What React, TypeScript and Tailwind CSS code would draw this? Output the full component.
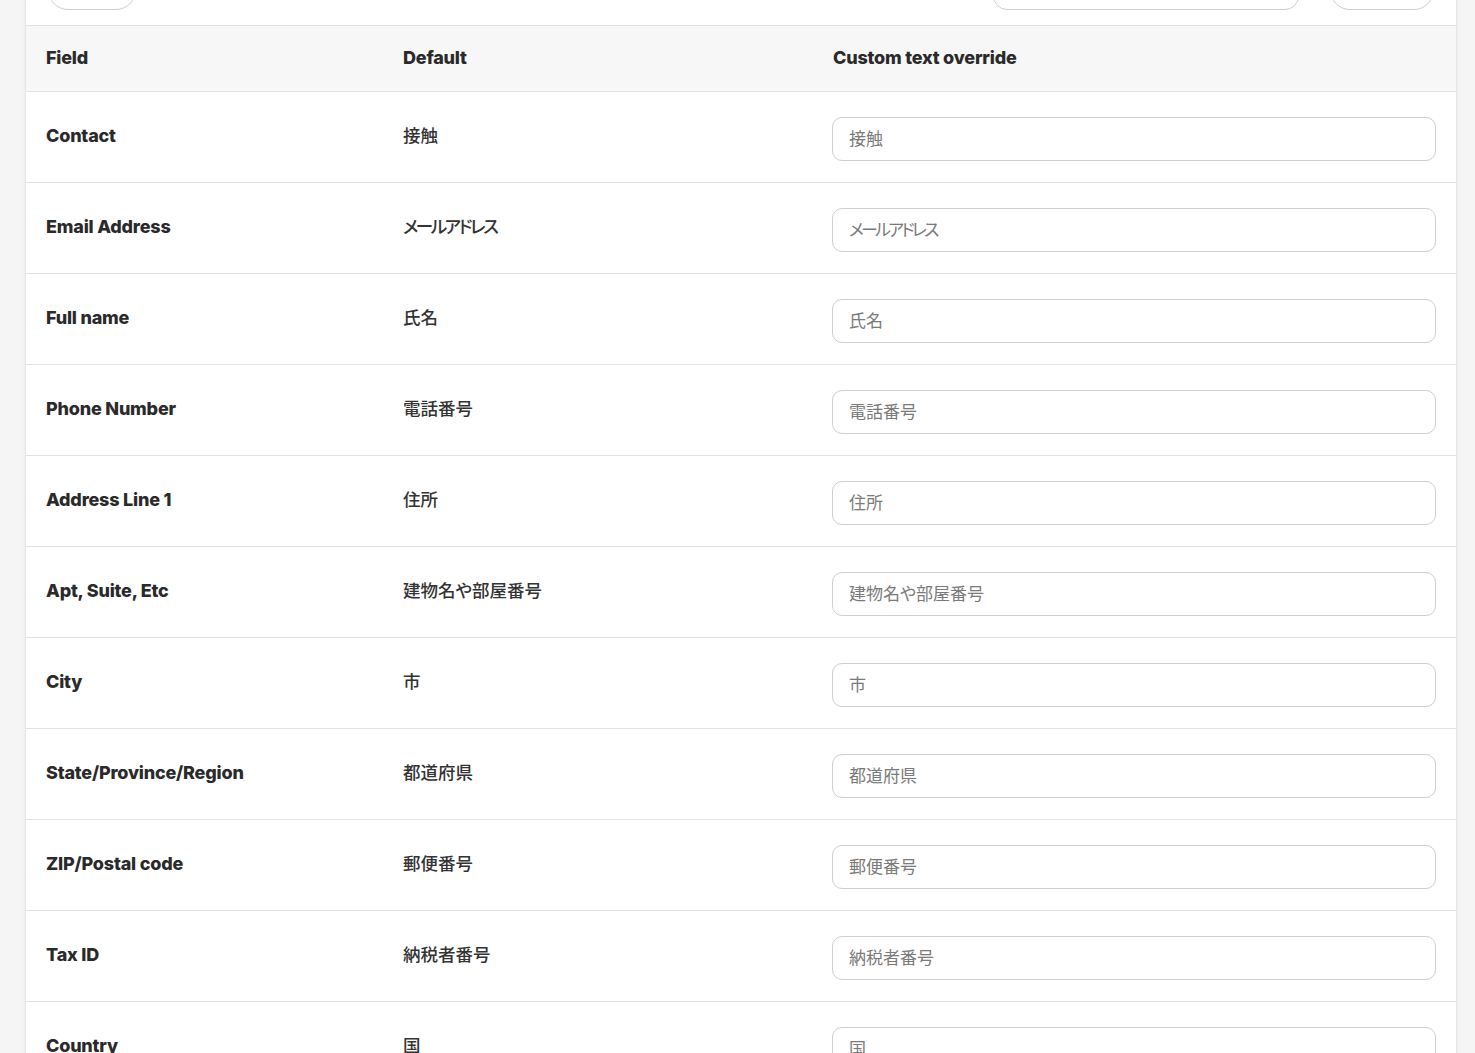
const rows: [string, string][] = [
  ["Contact", "接触"],
  ["Email Address", "メールアドレス"],
  ["Full name", "氏名"],
  ["Phone Number", "電話番号"],
  ["Address Line 1", "住所"],
  ["Apt, Suite, Etc", "建物名や部屋番号"],
  ["City", "市"],
  ["State/Province/Region", "都道府県"],
  ["ZIP/Postal code", "郵便番号"],
  ["Tax ID", "納税者番号"],
  ["Country", "国"],
];

const font = { fontFamily: 'Inter, "Noto Sans CJK JP", sans-serif' };
const isKana = (s: string) => /[\u30A0-\u30FF]{3,}/.test(s);

export default function App() {
  return (
    <div className="min-h-[1053px] bg-[#f5f5f6] text-[#2a2a2a]" style={font}>
      <div className="ml-[25px] w-[1432px] border-x border-[#e6e6e6] bg-white shadow-[0_0_4px_rgba(0,0,0,0.06)]">
        {/* clipped toolbar */}
        <div className="flex h-[25px] items-end overflow-hidden px-[22px] pb-[15px]">
          <div className="h-10 w-[88px] rounded-full border border-[#cfcfcf]" />
          <div className="ml-auto h-10 w-[306px] rounded-[14px] border border-[#cfcfcf]" />
          <div className="ml-[31px] h-10 w-[104px] rounded-full border border-[#cfcfcf]" />
        </div>

        <div className="grid grid-cols-[357px_429px_1fr] border-y border-[#e2e2e2] bg-[#f7f7f7] px-5">
          <div className="flex h-[65px] items-center pb-[2px] text-[18px] font-extrabold tracking-[-0.2px]">Field</div>
          <div className="flex h-[65px] items-center pb-[2px] text-[18px] font-extrabold tracking-[-0.2px]">Default</div>
          <div className="flex h-[65px] items-center pb-[2px] pl-px text-[18px] font-extrabold tracking-[-0.2px]">
            Custom text override
          </div>
        </div>

        {rows.map(([field, def]) => (
          <div
            key={field}
            className="grid h-[91px] grid-cols-[357px_429px_1fr] border-b border-[#e2e2e2] px-5"
          >
            <div className="pt-[32px] text-[18px] leading-6 font-extrabold tracking-[-0.2px]">{field}</div>
            <div
              className={
                "pt-[32px] text-[17.5px] leading-6 font-medium text-[#333] [font-feature-settings:'palt'] " +
                (isKana(def) ? "tracking-[-2.4px]" : "")
              }
            >
              {def}
            </div>
            <div className="pt-[25px]">
              <input
                placeholder={def}
                className={
                  "h-[44px] w-full rounded-[10px] border border-[#cfcfcf] px-4 text-[17px] outline-none [font-feature-settings:'palt'] placeholder:text-[#7a7a7a] " +
                  (isKana(def) ? "tracking-[-2.8px]" : "")
                }
                style={font}
              />
            </div>
          </div>
        ))}
      </div>
    </div>
  );
}
